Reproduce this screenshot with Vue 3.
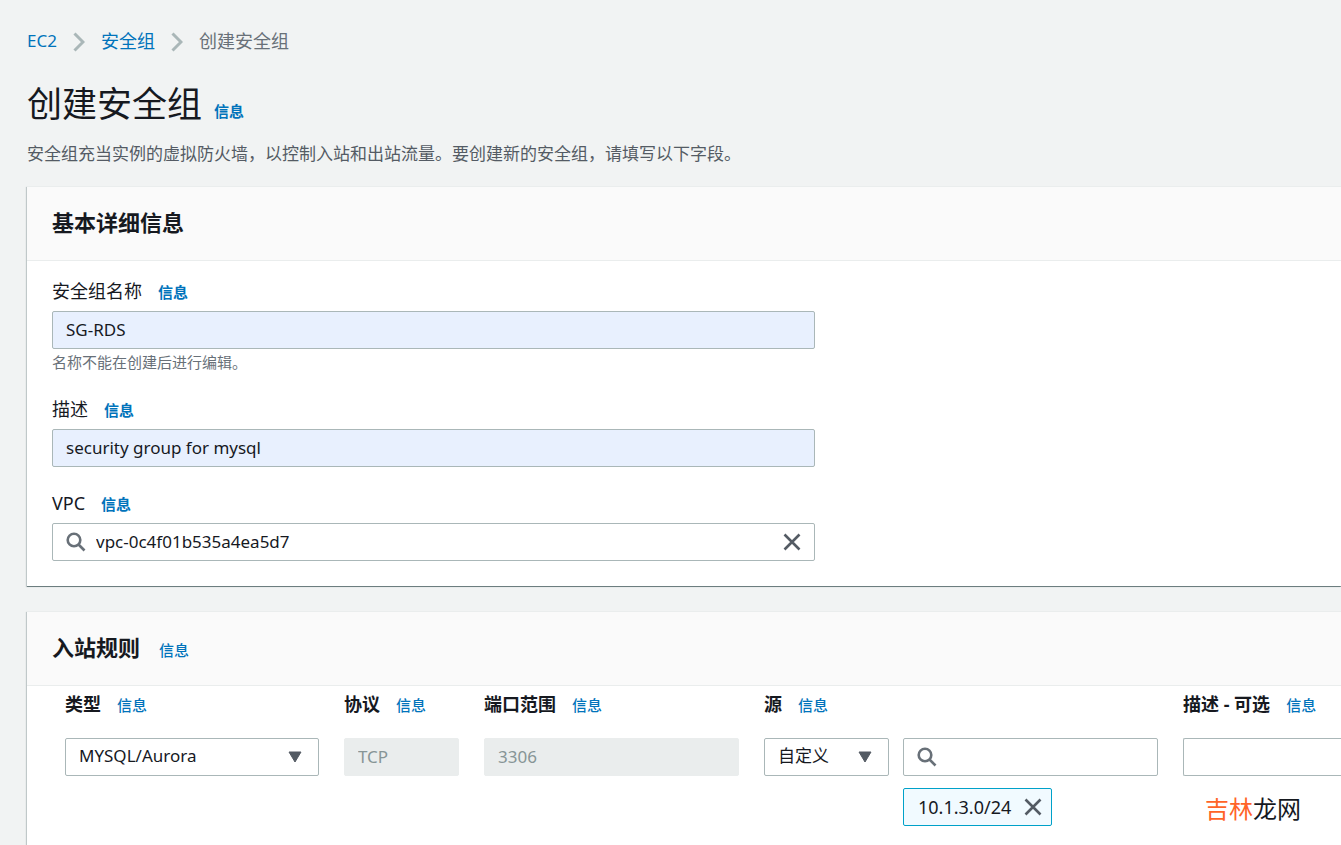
<script setup>
import { ref } from 'vue'

const groupName = ref('SG-RDS')
const description = ref('security group for mysql')
const vpc = ref('vpc-0c4f01b535a4ea5d7')
const ruleType = ref('mysql')
const sourceType = ref('custom')
const sourceQuery = ref('')
const ruleNote = ref('')
const sources = ref(['10.1.3.0/24'])

function removeSource(item) {
  sources.value = sources.value.filter((s) => s !== item)
}
</script>

<template>
  <div class="page">
    <nav class="crumbs" aria-label="breadcrumb">
      <a class="latin" href="#">EC2</a>
      <svg class="chevron" viewBox="0 0 12 20"><path d="M1.500 1.500 10 10l-8.500 8.500" /></svg>
      <a href="#">安全组</a>
      <svg class="chevron" viewBox="0 0 12 20"><path d="M1.500 1.500 10 10l-8.500 8.500" /></svg>
      <span>创建安全组</span>
    </nav>

    <header class="title">
      <h1>创建安全组</h1>
      <a class="info strong" href="#">信息</a>
    </header>
    <p class="lead">安全组充当实例的虚拟防火墙，以控制入站和出站流量。要创建新的安全组，请填写以下字段。</p>

    <section class="card">
      <div class="card-head">
        <h2>基本详细信息</h2>
      </div>
      <div class="fields">
        <div class="field">
          <div class="caption">
            <label for="name">安全组名称</label>
            <a class="info strong" href="#">信息</a>
          </div>
          <input id="name" v-model="groupName" class="control filled" type="text" />
          <p class="hint">名称不能在创建后进行编辑。</p>
        </div>
        <div class="field">
          <div class="caption">
            <label for="desc">描述</label>
            <a class="info strong" href="#">信息</a>
          </div>
          <input id="desc" v-model="description" class="control filled" type="text" />
        </div>
        <div class="field">
          <div class="caption">
            <label for="vpc">VPC</label>
            <a class="info strong" href="#">信息</a>
          </div>
          <div class="control search">
            <svg class="lens" viewBox="0 0 20 20"><circle cx="8" cy="8" r="6.300" /><path d="m12.500 12.500 6 6" /></svg>
            <input id="vpc" v-model="vpc" type="text" />
            <button type="button" aria-label="清除" @click="vpc = ''">
              <svg class="cross" viewBox="0 0 18 18"><path d="m1.500 1.500 15 15m0-15-15 15" /></svg>
            </button>
          </div>
        </div>
      </div>
    </section>

    <section class="card rules">
      <div class="card-head">
        <h2>入站规则</h2>
        <a class="info" href="#">信息</a>
      </div>
      <div class="rule">
        <div class="cell">
          <div class="caption">
            <label for="type">类型</label>
            <a class="info" href="#">信息</a>
          </div>
          <div class="picker">
            <select id="type" v-model="ruleType" class="control">
              <option value="mysql">MYSQL/Aurora</option>
            </select>
            <svg class="arrow" viewBox="0 0 14 12"><path d="M1 1h12L7 11z" /></svg>
          </div>
        </div>
        <div class="cell">
          <div class="caption">
            <label for="protocol">协议</label>
            <a class="info" href="#">信息</a>
          </div>
          <input id="protocol" class="control" type="text" value="TCP" disabled />
        </div>
        <div class="cell">
          <div class="caption">
            <label for="port">端口范围</label>
            <a class="info" href="#">信息</a>
          </div>
          <input id="port" class="control" type="text" value="3306" disabled />
        </div>
        <div class="cell">
          <div class="caption">
            <label for="source">源</label>
            <a class="info" href="#">信息</a>
          </div>
          <div class="source">
            <div class="picker">
              <select id="source" v-model="sourceType" class="control">
                <option value="custom">自定义</option>
              </select>
              <svg class="arrow" viewBox="0 0 14 12"><path d="M1 1h12L7 11z" /></svg>
            </div>
            <div class="lookup">
              <div class="control search">
                <svg class="lens" viewBox="0 0 20 20"><circle cx="8" cy="8" r="6.300" /><path d="m12.500 12.500 6 6" /></svg>
                <input v-model="sourceQuery" type="text" aria-label="源" />
              </div>
              <div v-for="item in sources" :key="item" class="token">
                <span>{{ item }}</span>
                <button type="button" aria-label="移除" @click="removeSource(item)">
                  <svg class="cross" viewBox="0 0 18 18"><path d="m1.500 1.500 15 15m0-15-15 15" /></svg>
                </button>
              </div>
            </div>
          </div>
        </div>
        <div class="cell">
          <div class="caption">
            <label for="note">描述 - 可选</label>
            <a class="info" href="#">信息</a>
          </div>
          <input id="note" v-model="ruleNote" class="control bleed" type="text" />
        </div>
      </div>
    </section>

    <div class="mark"><span>吉林</span>龙网</div>
  </div>
</template>

<style>
body {
  background: #f1f3f3;
}
</style>

<style scoped>
.page {
  box-sizing: border-box;
  position: relative;
  display: flex;
  flex-direction: column;
  min-height: 100vh;
  padding: 28px 0 0 27px;
  overflow: hidden;
  background: #f1f3f3;
  color: #16191f;
  font: 17px/26px "Noto Sans", "Noto Sans CJK SC", sans-serif;
}
.page * {
  box-sizing: border-box;
}
h1,
h2,
p {
  margin: 0;
}
a {
  color: #0073bb;
  text-decoration: none;
}
.crumbs {
  display: flex;
  align-items: center;
  color: #687078;
  font-size: 18px;
}
.latin {
  font-size: 17px;
}
.chevron {
  width: 12px;
  height: 20px;
  margin: 2px 16px 0;
  fill: none;
  stroke: #aab7b8;
  stroke-width: 3;
}
.title {
  display: flex;
  align-items: baseline;
  gap: 12px;
  margin-top: 28px;
}
h1 {
  font-size: 35px;
  font-weight: 400;
  line-height: 44px;
}
.info {
  font-size: 15px;
  font-weight: 500;
  line-height: 22px;
}
.strong {
  font-weight: 700;
}
.lead {
  margin-top: 15px;
  color: #545b64;
}
.card {
  margin-top: 19px;
  border-top: 1px solid #eaeded;
  background: #fff;
  box-shadow: -1px 1px 1px 0 rgba(0, 28, 36, 0.2), 0 1px 0 0 #879596;
}
.card-head {
  display: flex;
  align-items: baseline;
  gap: 19px;
  padding: 21px 25px 23px;
  border-bottom: 1px solid #eaeded;
  background: #fafafa;
}
h2 {
  font-size: 22px;
  font-weight: 700;
  line-height: 29px;
}
.fields {
  display: flex;
  flex-direction: column;
  gap: 23px;
  max-width: 813px;
  padding: 17px 25px 25px;
}
.caption {
  display: flex;
  align-items: baseline;
  gap: 16px;
  height: 26px;
  margin-bottom: 7px;
  white-space: nowrap;
}
.caption label {
  font-size: 18px;
}
.control {
  display: block;
  width: 100%;
  height: 38px;
  margin: 0;
  padding: 0 12px 2px 13px;
  border: 1px solid #aab7b8;
  border-radius: 2px;
  outline: 0;
  background: #fff;
  color: #16191f;
  font: inherit;
}
.filled {
  background: #e8f0fe;
}
.control:disabled {
  border-color: #eaeded;
  background: #eaeded;
  color: #879596;
}
.hint {
  margin-top: 2px;
  color: #687078;
  font-size: 15px;
  line-height: 22px;
}
.control.search {
  display: flex;
  align-items: center;
  gap: 10px;
  padding: 0 13px;
}
.search input {
  flex: 1;
  min-width: 0;
  padding: 0;
  border: 0;
  outline: 0;
  background: none;
  color: inherit;
  font: inherit;
}
.lens {
  flex: none;
  width: 20px;
  height: 20px;
  fill: none;
  stroke: #687078;
  stroke-width: 2.6;
}
button {
  display: flex;
  padding: 0;
  border: 0;
  background: none;
}
.cross {
  width: 18px;
  height: 18px;
  fill: none;
  stroke: #545b64;
  stroke-width: 2.6;
}
.rules {
  flex: 1;
  margin-top: 25px;
}
.rule {
  display: grid;
  grid-template-columns: 254fr 115fr 255fr 394fr 158fr;
  gap: 25px;
  padding: 5px 0 0 38px;
}
.cell,
.lookup {
  min-width: 0;
}
.rule .caption {
  margin-bottom: 21px;
}
.rule label {
  font-weight: 700;
}
.picker {
  position: relative;
  min-width: 0;
}
select.control {
  appearance: none;
}
.arrow {
  position: absolute;
  top: 13px;
  right: 17px;
  width: 14px;
  height: 12px;
  fill: #545b64;
  stroke: #545b64;
  stroke-linejoin: round;
  pointer-events: none;
}
.source {
  display: grid;
  grid-template-columns: minmax(0, 125fr) minmax(0, 255fr);
  gap: 14px;
}
.token {
  display: flex;
  align-items: center;
  gap: 13px;
  width: max-content;
  height: 38px;
  margin-top: 12px;
  padding: 0 9px 0 14px;
  border: 1px solid #00a1c9;
  border-radius: 2px;
  background: #f1faff;
  font-size: 18px;
}
.bleed {
  border-right: 0;
  border-radius: 2px 0 0 2px;
}
.mark {
  position: absolute;
  right: 40px;
  bottom: 19px;
  color: #16191f;
  font-size: 24px;
  line-height: 34px;
}
.mark span {
  color: #ff6428;
}
</style>
